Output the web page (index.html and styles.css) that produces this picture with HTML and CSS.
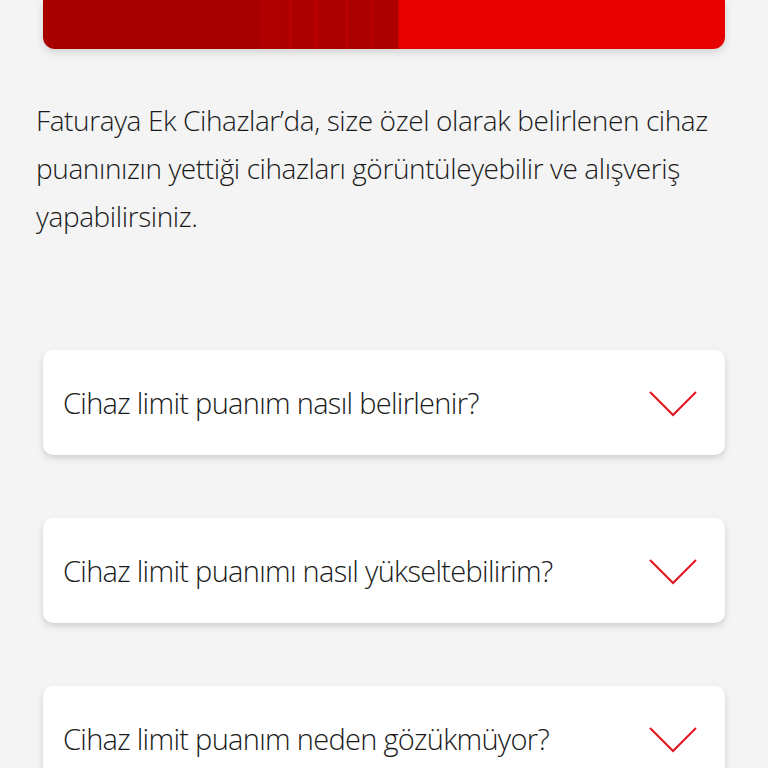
FILE: index.html
```html
<!DOCTYPE html>
<html lang="tr">
<head>
<meta charset="utf-8">
<link rel="stylesheet" href="styles.css">
</head>
<body>
<div class="banner"></div>
<p class="intro">Faturaya Ek Cihazlar’da, size özel olarak belirlenen cihaz puanınızın yettiği cihazları görüntüleyebilir ve alışveriş yapabilirsiniz.</p>
<div class="faq">
  <div class="card"><span class="q">Cihaz limit puanım nasıl belirlenir?</span><svg class="chev" width="48" height="28" viewBox="0 0 48 28"><polyline points="1,2 24,25 47,2" fill="none" stroke="#e3101e" stroke-width="2"/></svg></div>
  <div class="card"><span class="q">Cihaz limit puanımı nasıl yükseltebilirim?</span><svg class="chev" width="48" height="28" viewBox="0 0 48 28"><polyline points="1,2 24,25 47,2" fill="none" stroke="#e3101e" stroke-width="2"/></svg></div>
  <div class="card"><span class="q">Cihaz limit puanım neden gözükmüyor?</span><svg class="chev" width="48" height="28" viewBox="0 0 48 28"><polyline points="1,2 24,25 47,2" fill="none" stroke="#e3101e" stroke-width="2"/></svg></div>
</div>
</body>
</html>
```
FILE: styles.css
```css
html, body { margin: 0; padding: 0; background: #f4f4f4; }
body { font-family: "Open Sans", "Noto Sans", sans-serif; color: #1a1a1a; overflow: hidden; height: 768px; }
.banner {
  height: 49px;
  margin: 0 43px;
  border-radius: 0 0 12px 12px;
  box-shadow: 0 3px 8px rgba(0,0,0,0.15);
  background: linear-gradient(90deg,
    #a80000 0, #a80000 217px,
    #b30000 218px, #ad0000 246px,
    #c20000 247px, #ad0000 250px, #ae0000 271px,
    #c20000 272px, #ad0000 275px, #ab0000 302px,
    #c40000 303px, #ab0000 306px, #aa0000 327px,
    #c00000 328px, #a90000 331px, #b00000 355px,
    #e60000 356px, #e60000 100%);
}
.intro {
  margin: 47px 36px 0 36px;
  font-size: 28px;
  line-height: 48px;
  font-weight: 340;
  font-stretch: 92%;
  letter-spacing: -0.4px;
}
.faq { margin: 110px 43px 0 43px; display: flex; flex-direction: column; gap: 63px; }
.card {
  height: 105px;
  background: #fff;
  border-radius: 10px;
  box-shadow: 0 3px 6px rgba(0,0,0,0.16);
  display: flex; align-items: center; justify-content: space-between;
  padding: 0 28px 0 20px;
}
.q { font-size: 29px; font-weight: 340; font-stretch: 89%; letter-spacing: -0.7px; }
.chev { display: block; margin-top: 2px; }
```
